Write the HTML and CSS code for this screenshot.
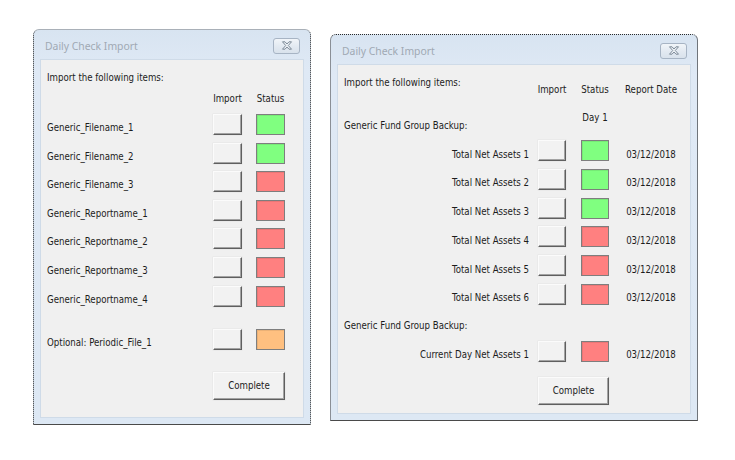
FILE: index.html
```html
<!DOCTYPE html>
<html>
<head>
<meta charset="utf-8">
<link rel="stylesheet" href="styles.css">
</head>
<body>
<div class="desk">
  <div class="win win-a">
    <div class="titlebar">
      <span class="title">Daily Check Import</span>
      <span class="close"><svg width="12" height="9" viewBox="0 0 12 9"><path d="M1.5 0.8 H4 L6 3 L8 0.8 H10.5 L7.3 4.5 L10.5 8.2 H8 L6 6 L4 8.2 H1.5 L4.7 4.5 Z" fill="#eef2f6" stroke="#7d8a98" stroke-width="1" stroke-linejoin="round"/></svg></span>
    </div>
    <div class="client client-a">
      <div class="intro">Import the following items:</div>
      <div class="grid-a head-a">
        <span></span><span class="hcell">Import</span><span class="hcell">Status</span>
      </div>
      <div class="grid-a row-a"><span class="lbl">Generic_Filename_1</span><span class="btn"></span><span class="st green"></span></div>
      <div class="grid-a row-a"><span class="lbl">Generic_Filename_2</span><span class="btn"></span><span class="st green"></span></div>
      <div class="grid-a row-a"><span class="lbl">Generic_Filename_3</span><span class="btn"></span><span class="st red"></span></div>
      <div class="grid-a row-a"><span class="lbl">Generic_Reportname_1</span><span class="btn"></span><span class="st red"></span></div>
      <div class="grid-a row-a"><span class="lbl">Generic_Reportname_2</span><span class="btn"></span><span class="st red"></span></div>
      <div class="grid-a row-a"><span class="lbl">Generic_Reportname_3</span><span class="btn"></span><span class="st red"></span></div>
      <div class="grid-a row-a"><span class="lbl">Generic_Reportname_4</span><span class="btn"></span><span class="st red"></span></div>
      <div class="grid-a row-a row-opt"><span class="lbl">Optional: Periodic_File_1</span><span class="btn"></span><span class="st orange"></span></div>
      <div class="foot foot-a"><span class="btn cmd">Complete</span></div>
    </div>
  </div>

  <div class="win win-b">
    <div class="titlebar">
      <span class="title">Daily Check Import</span>
      <span class="close"><svg width="12" height="9" viewBox="0 0 12 9"><path d="M1.5 0.8 H4 L6 3 L8 0.8 H10.5 L7.3 4.5 L10.5 8.2 H8 L6 6 L4 8.2 H1.5 L4.7 4.5 Z" fill="#eef2f6" stroke="#7d8a98" stroke-width="1" stroke-linejoin="round"/></svg></span>
    </div>
    <div class="client client-b">
      <div class="grid-b head-b">
        <span class="intro-b">Import the following items:</span>
        <span class="hcell hb">Import</span><span class="hcell hb">Status</span><span class="hcell hb">Report Date</span>
      </div>
      <div class="grid-b sect-b">
        <span class="sect">Generic Fund Group Backup:</span>
        <span></span><span class="hcell">Day 1</span><span></span>
      </div>
      <div class="grid-b row-b first"><span class="lblr">Total Net Assets 1</span><span class="btn"></span><span class="st green"></span><span class="date">03/12/2018</span></div>
      <div class="grid-b row-b"><span class="lblr">Total Net Assets 2</span><span class="btn"></span><span class="st green"></span><span class="date">03/12/2018</span></div>
      <div class="grid-b row-b"><span class="lblr">Total Net Assets 3</span><span class="btn"></span><span class="st green"></span><span class="date">03/12/2018</span></div>
      <div class="grid-b row-b"><span class="lblr">Total Net Assets 4</span><span class="btn"></span><span class="st red"></span><span class="date">03/12/2018</span></div>
      <div class="grid-b row-b"><span class="lblr">Total Net Assets 5</span><span class="btn"></span><span class="st red"></span><span class="date">03/12/2018</span></div>
      <div class="grid-b row-b"><span class="lblr">Total Net Assets 6</span><span class="btn"></span><span class="st red"></span><span class="date">03/12/2018</span></div>
      <div class="sect sect2">Generic Fund Group Backup:</div>
      <div class="grid-b row-b cur"><span class="lblr">Current Day Net Assets 1</span><span class="btn"></span><span class="st red"></span><span class="date">03/12/2018</span></div>
      <div class="foot foot-b"><span class="btn cmd">Complete</span></div>
    </div>
  </div>
</div>
</body>
</html>
```

FILE: styles.css
```css
html, body {
  margin: 0;
  padding: 0;
  background: #ffffff;
}

body {
  font-family: "DejaVu Sans Condensed", "DejaVu Sans", sans-serif;
  font-size: 9.6px;
  color: #1c1c1c;
}

.desk {
  display: flex;
  align-items: flex-start;
  gap: 19px;
  padding-left: 33px;
}

.win {
  box-sizing: border-box;
  display: flex;
  flex-direction: column;
  padding: 0 7px 7px;
  background: linear-gradient(180deg, #d8e4f1 0%, #dfe9f5 40px, #dde8f4 100%);
  border-radius: 6px 6px 0 0;
}

.win-a {
  width: 278px;
  margin-top: 29px;
  border-top: 1px solid #a9b0b8;
  border-left: 1px dotted #2a2a2a;
  border-right: 1px dotted #2a2a2a;
  border-bottom: 1px solid #4a4a4a;
}

.win-b {
  width: 368px;
  margin-top: 34px;
  border-top: 1px dotted #2a2a2a;
  border-left: 1px solid #8a8f96;
  border-right: 1px solid #6f747a;
  border-bottom: 1px solid #4a4a4a;
}

.titlebar {
  height: 30px;
  display: flex;
  align-items: center;
  justify-content: space-between;
  padding: 0 3px 0 4px;
}

.title {
  font-family: "Noto Sans", sans-serif;
  font-size: 10.4px;
  color: #a0a9b3;
  margin-top: 1px;
}

.close {
  width: 25px;
  height: 14px;
  border: 1px solid #a7b4c4;
  border-radius: 3px;
  background: linear-gradient(180deg, #f1f5f9 0%, #e2e9f1 55%, #d9e2ec 100%);
  display: flex;
  align-items: center;
  justify-content: center;
  margin-top: 1px;
}

.close svg {
  display: block;
}

.client {
  background: #f0f0f0;
  box-shadow: 0 0 0 1px #cfdbe8;
  box-sizing: border-box;
  display: flex;
  flex-direction: column;
}

.client-a {
  height: 357px;
  padding: 12px 18px 0 6px;
}

.client-b {
  height: 348px;
  padding: 12px 12px 0 6px;
}

.intro,
.intro-b,
.hcell,
.lbl,
.lblr,
.date,
.sect {
  line-height: 12px;
  white-space: nowrap;
}

.grid-a {
  display: grid;
  grid-template-columns: 1fr 29px 29px;
  column-gap: 14px;
  align-items: start;
}

.head-a {
  margin-top: 9px;
}

.hcell {
  justify-self: center;
}

.row-a {
  height: 28.6px;
}

.head-a + .row-a {
  margin-top: 9px;
}

.row-opt {
  margin-top: 14.8px;
}

.lbl {
  margin-top: 8px;
}

.btn {
  box-sizing: border-box;
  display: block;
  height: 21px;
  background: #f2f2f2;
  border-top: 1px solid #fbfbfb;
  border-left: 1px solid #fbfbfb;
  border-right: 1px solid #5f5f5f;
  border-bottom: 1px solid #5f5f5f;
  box-shadow: inset -1px -1px 0 #a3a3a3, 0 0 0 0.5px #e3e3e3;
}

.st {
  box-sizing: border-box;
  display: block;
  height: 21px;
  border: 1px solid #7e7e7e;
  box-shadow: inset 1px 1px 0 rgba(0, 0, 0, 0.08);
}

.green { background: #80ff80; }
.red { background: #ff8080; }
.orange { background: #ffc080; }

.foot {
  display: flex;
  justify-content: flex-end;
}

.foot-a {
  margin-top: 14.4px;
}

.cmd {
  height: 28px;
  width: 72px;
  display: flex;
  align-items: center;
  justify-content: center;
  color: #1c1c1c;
}

/* right window */
.grid-b {
  display: grid;
  grid-template-columns: 1fr 28px 28px 54px;
  column-gap: 15px;
  align-items: start;
}

.head-b .hb {
  margin-top: 7px;
}

.intro-b {
  justify-self: start;
}

.sect-b {
  margin-top: 16px;
}

.sect-b .sect {
  margin-top: 8px;
}

.row-b {
  height: 28.8px;
}

.row-b.first {
  margin-top: 8px;
}

.lblr {
  justify-self: end;
  margin-right: -6px;
  margin-top: 8.5px;
}

.date {
  justify-self: center;
  margin-top: 8.5px;
}

.sect2 {
  margin-top: 7.2px;
}

.row-b.cur {
  margin-top: 9px;
}

.foot-b {
  margin-top: 7.2px;
  padding-right: 69px;
}

.foot-b .cmd {
  width: 71px;
}
```
